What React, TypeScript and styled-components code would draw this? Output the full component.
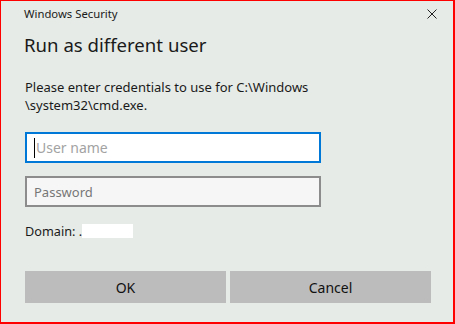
import React from 'react';
import styled, { createGlobalStyle } from 'styled-components';

const GlobalStyle = createGlobalStyle`
  html, body {
    margin: 0;
    padding: 0;
    background: #ffffff;
  }
  * {
    box-sizing: border-box;
  }
`;

const Window = styled.div`
  width: 455px;
  height: 324px;
  border: 1px solid #ff0000;
  border-right-width: 2px;
  border-bottom-width: 2px;
  background: #e6ebe7;
  font-family: "Noto Sans", "Open Sans", sans-serif;
  color: #1a1a1a;
  padding: 4px 0 0 24px;
  display: flex;
  flex-direction: column;
`;

const TitleBar = styled.div`
  display: flex;
  align-items: center;
  justify-content: space-between;
  height: 16px;
  padding-right: 15px;
`;

const WindowTitle = styled.span`
  font-size: 11.3px;
  line-height: 16px;
  margin-left: -1px;
  margin-top: 1px;
`;

const CloseButton = styled.button`
  width: 12px;
  height: 12px;
  padding: 0;
  margin-top: 2px;
  border: none;
  background: transparent;
  display: flex;
  align-items: center;
  justify-content: center;
  cursor: pointer;
`;

const Heading = styled.h1`
  margin: 10px 0 0 -1px;
  font-size: 18.6px;
  line-height: 28px;
  font-weight: 400;
  color: #1a1a1a;
`;

const Description = styled.p`
  margin: 19px 0 0;
  width: 300px;
  font-size: 13px;
  line-height: 18px;
`;

const Field = styled.div<{ $focused?: boolean }>`
  width: 296px;
  height: 31px;
  margin-top: ${({ $focused }) => ($focused ? '18px' : '13px')};
  border: 2px solid ${({ $focused }) => ($focused ? '#0078d7' : '#8c8c8c')};
  background: ${({ $focused }) => ($focused ? '#ffffff' : '#f6f6f6')};
  display: flex;
  align-items: center;
  padding-left: 7px;
`;

const Caret = styled.span`
  width: 1px;
  height: 20px;
  background: #000000;
  flex: none;
`;

const TextInput = styled.input<{ $large?: boolean }>`
  flex: 1;
  min-width: 0;
  border: none;
  outline: none;
  background: transparent;
  padding: 0 0 0 ${({ $large }) => ($large ? '1px' : '0')};
  font-family: inherit;
  font-size: ${({ $large }) => ($large ? '14px' : '13px')};
  caret-color: transparent;
  &::placeholder {
    color: ${({ $large }) => ($large ? '#a3a3a3' : '#767676')};
  }
`;

const DomainRow = styled.div`
  display: flex;
  align-items: flex-start;
  margin-top: 16px;
  height: 16px;
  font-size: 12.7px;
  line-height: 16px;
`;

const DomainValue = styled.span`
  width: 51px;
  height: 14px;
  margin-top: 1px;
  background: #ffffff;
`;

const ButtonRow = styled.div`
  display: flex;
  gap: 4px;
  margin-top: 32px;
`;

const DialogButton = styled.button`
  width: 201px;
  height: 32px;
  border: none;
  background: #bcbcbc;
  font-family: inherit;
  font-size: 14px;
  color: #111111;
  padding: 0;
  cursor: pointer;
`;

export default function App() {
  return (
    <>
      <GlobalStyle />
      <Window>
        <TitleBar>
          <WindowTitle>Windows Security</WindowTitle>
          <CloseButton aria-label="Close">
            <svg width="10" height="10" viewBox="0 0 10 10">
              <path d="M0.5 0.5 L9.5 9.5 M9.5 0.5 L0.5 9.5" stroke="#222" strokeWidth="1" fill="none" />
            </svg>
          </CloseButton>
        </TitleBar>
        <Heading>Run as different user</Heading>
        <Description>
          Please enter credentials to use for C:\Windows
          <br />
          \system32\cmd.exe.
        </Description>
        <Field $focused>
          <Caret />
          <TextInput $large placeholder="User name" />
        </Field>
        <Field>
          <TextInput type="password" placeholder="Password" />
        </Field>
        <DomainRow>
          Domain: .<DomainValue />
        </DomainRow>
        <ButtonRow>
          <DialogButton>OK</DialogButton>
          <DialogButton>Cancel</DialogButton>
        </ButtonRow>
      </Window>
    </>
  );
}
